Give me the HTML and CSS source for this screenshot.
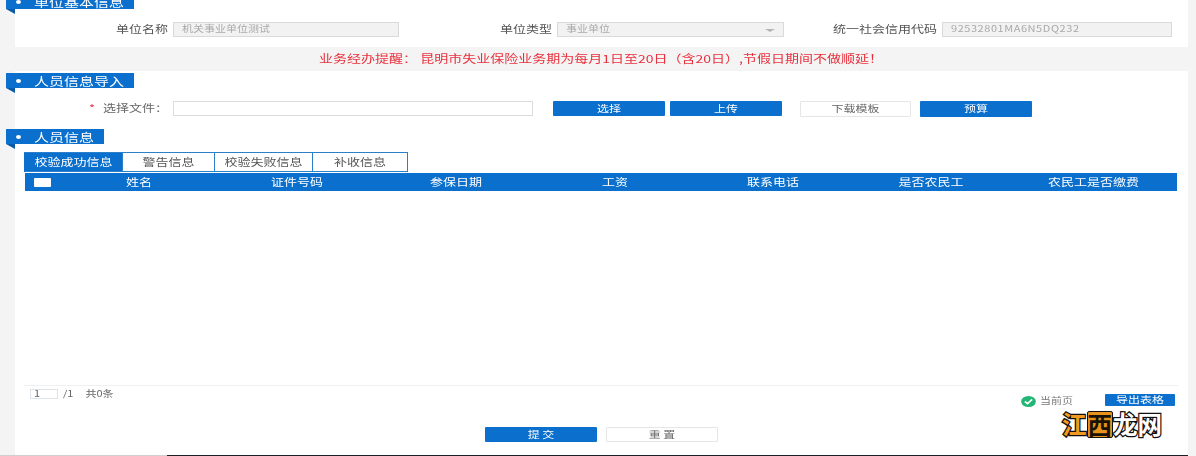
FILE: index.html
```html
<!DOCTYPE html>
<html lang="zh-CN">
<head>
<meta charset="utf-8">
<title>人员信息导入</title>
<link rel="stylesheet" href="styles.css">
</head>
<body>
<div class="page">
  <section class="panel panel-info">
    <h2 class="ribbon ribbon-top ribbon-wide"><i class="dot"></i><span class="sq">单位基本信息</span></h2>
    <div class="info-row">
      <label class="lab lab-a"><span class="sq">单位名称</span></label>
      <div class="box box-a"><span class="sq">机关事业单位测试</span></div>
      <label class="lab lab-a"><span class="sq">单位类型</span></label>
      <div class="box box-b"><span class="sq">事业单位</span><i class="caret"></i></div>
      <label class="lab lab-a"><span class="sq">统一社会信用代码</span></label>
      <div class="box box-c"><span class="sq">92532801MA6N5DQ232</span></div>
    </div>
  </section>
  <p class="notice"><span class="sq">业务经办提醒：&nbsp;昆明市失业保险业务期为每月1日至20日（含20日）,节假日期间不做顺延！</span></p>
  <section class="panel panel-main">
    <h2 class="ribbon ribbon-wide"><i class="dot"></i><span class="sq">人员信息导入</span></h2>
    <div class="upload-row">
      <label class="file-lab"><span class="sq"><b>*</b>选择文件：</span></label>
      <div class="file-input"></div>
      <button class="btn btn-blue btn-first"><span class="sq">选择</span></button>
      <button class="btn btn-blue btn-up"><span class="sq">上传</span></button>
      <button class="btn btn-white btn-down"><span class="sq">下载模板</span></button>
      <button class="btn btn-blue btn-calc"><span class="sq">预算</span></button>
    </div>
    <h2 class="ribbon ribbon-narrow"><i class="dot"></i><span class="sq">人员信息</span></h2>
    <div class="tabs">
      <div class="tab tab-on tab-1"><span class="sq">校验成功信息</span></div>
      <div class="tab tab-2"><span class="sq">警告信息</span></div>
      <div class="tab tab-3"><span class="sq">校验失败信息</span></div>
      <div class="tab tab-4"><span class="sq">补收信息</span></div>
    </div>
    <div class="thead">
      <div class="th-check"><i class="check"></i></div>
      <div class="th"><span class="sq">姓名</span></div>
      <div class="th"><span class="sq">证件号码</span></div>
      <div class="th"><span class="sq">参保日期</span></div>
      <div class="th"><span class="sq">工资</span></div>
      <div class="th"><span class="sq">联系电话</span></div>
      <div class="th"><span class="sq">是否农民工</span></div>
      <div class="th"><span class="sq">农民工是否缴费</span></div>
    </div>
    <div class="tbody"></div>
    <div class="pager-row">
      <div class="pager">
        <div class="page-box"><span class="sq">1</span></div>
        <span class="sq page-total">/1</span>
        <span class="sq page-count">共0条</span>
      </div>
      <div class="pager-right">
        <svg class="ok" viewBox="0 0 16 12" aria-hidden="true"><ellipse cx="8" cy="6" rx="8" ry="6" fill="#22b573"/><path d="M4 6l3 2.4L12 3.6" fill="none" stroke="#fff" stroke-width="1.8"/></svg>
        <span class="sq cur">当前页</span>
        <button class="btn btn-blue btn-export"><span class="sq">导出表格</span></button>
      </div>
    </div>
    <div class="actions">
      <button class="btn btn-blue btn-act"><span class="sq">提 交</span></button>
      <button class="btn btn-white btn-act"><span class="sq">重 置</span></button>
    </div>
  </section>
  <div class="mark"><span class="mk-a">江</span><span class="mk-b">西</span><span class="mk-c">龙网</span></div>
</div>
<div class="edge"></div>
</body>
</html>
```
FILE: styles.css
```css
* { box-sizing: border-box; }
html, body { margin: 0; padding: 0; }
body {
  position: relative;
  width: 1196px;
  height: 456px;
  overflow: hidden;
  background: #f4f4f4;
  color: #555;
  font-family: "Noto Sans CJK SC", "Liberation Sans", sans-serif;
  font-size: 13px;
}
.page { width: 1173px; margin-left: 15px; }
.sq { display: inline-block; transform: translateY(-1px) scaleY(.78); white-space: nowrap; line-height: 1; filter: blur(.35px); }
.panel { background: #fff; }
.panel-info { display: flow-root; height: 47px; }
.panel-main { display: flow-root; height: 385px; }

.ribbon {
  position: relative;
  display: flex;
  align-items: center;
  height: 15px;
  margin: 0 0 0 -9px;
  background: #0a6fcd;
  color: #fff;
  font-size: 15px;
  font-weight: 400;
}
.ribbon .sq { transform: scaleY(.78); }
.ribbon::after {
  content: "";
  position: absolute;
  left: 0;
  top: 100%;
  border-top: 5px solid #0a5aa8;
  border-left: 9px solid transparent;
}
.ribbon-top { margin-top: -6px; }
.ribbon-wide { width: 128px; }
.ribbon-narrow { width: 98px; margin-top: 12px; }
.panel-main > .ribbon-wide { margin-top: 2px; }
.dot { width: 5px; height: 4px; margin: 0 13px 0 10px; border-radius: 50%; background: #fff; }

.info-row { display: flex; align-items: stretch; height: 15px; margin-top: 13px; }
.lab { display: flex; align-items: center; justify-content: flex-end; width: 158px; padding-right: 5px; font-size: 13px; color: #555; }
.box {
  position: relative;
  display: flex;
  align-items: center;
  padding-left: 8px;
  border: 1px solid #dadada;
  background: #f3f2f2;
  color: #a9a9a9;
  font-size: 11px;
}
.box-a { width: 226px; }
.box-b { width: 227px; }
.box-c { width: 230px; letter-spacing: .55px; }
.caret {
  position: absolute;
  right: 8px;
  top: 6px;
  border-top: 3px solid #b5b5b5;
  border-left: 5px solid transparent;
  border-right: 5px solid transparent;
}

.notice {
  height: 24px;
  margin: 0;
  padding-left: 304px;
  display: flex;
  align-items: center;
  color: #e9303d;
  font-size: 14px;
}

.upload-row { display: flex; align-items: flex-start; height: 16px; margin-top: 13px; }
.file-lab { display: flex; align-items: center; justify-content: flex-end; width: 153px; height: 15px; font-size: 13px; color: #666; }
.file-lab b { margin-right: 8px; color: #e9303d; font-weight: 400; }
.file-input { width: 360px; height: 15px; margin-left: 5px; border: 1px solid #dcdcdc; background: #fff; }

.btn {
  display: flex;
  align-items: center;
  justify-content: center;
  padding: 0;
  border: 0;
  font: inherit;
  font-size: 12px;
  border-radius: 1px;
}
.btn-blue { background: #0a6fcd; color: #fff; }
.btn-white { background: #fff; border: 1px solid #e6e6e6; color: #666; }
.btn-first { width: 112px; height: 15px; margin-left: 20px; }
.btn-up { width: 112px; height: 15px; margin-left: 5px; }
.btn-down { width: 111px; height: 16px; margin-left: 18px; }
.btn-calc { width: 112px; height: 16px; margin-left: 9px; }

.tabs { display: flex; height: 20px; margin: 8px 0 1px 9px; }
.tab {
  display: flex;
  align-items: center;
  justify-content: center;
  height: 20px;
  border: 1px solid #2b80c9;
  border-left: 0;
  color: #555;
  font-size: 13px;
}
.tab-on { background: #0a6fcd; color: #fff; border-left: 1px solid #0a6fcd; }
.tab-1 { width: 99px; }
.tab-2 { width: 92px; }
.tab-3 { width: 98px; }
.tab-4 { width: 95px; }

.thead {
  display: grid;
  grid-template-columns: 35px 158px 158px 160px 158px 158px 158px 167px;
  align-items: center;
  width: 1152px;
  height: 18px;
  margin-left: 10px;
  background: #0a6fcd;
  color: #fff;
  font-size: 13px;
}
.th { text-align: center; }
.th-check { display: flex; padding-left: 9px; }
.check { width: 17px; height: 9px; background: #fff; border-radius: 1px; }
.tbody { height: 195px; margin: 0 10px 0 9px; border-bottom: 1px solid #f0f0f0; }

.pager-row { display: flex; justify-content: space-between; height: 41px; margin-left: 15px; }
.pager { display: flex; align-items: flex-start; padding-top: 3px; font-size: 11px; color: #666; }
.page-box { display: flex; align-items: center; width: 28px; height: 10px; padding-left: 3px; border: 1px solid #dde3e8; }
.page-total { margin-left: 5px; }
.page-count { margin-left: 12px; }
.pager-right { display: flex; align-items: center; height: 13px; margin-top: 7px; padding-right: 13px; }
.ok { display: block; width: 15px; height: 11px; margin-top: 3px; }
.cur { width: 65px; margin: 3px 0 0 4px; font-size: 11px; color: #777; }
.btn-export { width: 70px; height: 12px; font-size: 12px; }

.actions { display: flex; gap: 9px; margin-left: 470px; }
.btn-act { width: 112px; height: 15px; font-size: 12px; }

.mark {
  position: absolute;
  left: 1062px;
  top: 407px;
  display: flex;
  font-size: 24.5px;
  font-weight: 700;
  line-height: 34px;
  -webkit-text-stroke: 2.5px #111;
  paint-order: stroke fill;
}
.mk-a { color: #f29a1f; }
.mk-b { color: #1a1206; background: #e8931c; height: 27px; margin-top: 4px; line-height: 25px; border: 1px solid #111; border-radius: 2px; -webkit-text-stroke: 0; }
.mk-c { color: #fff; }
.edge {
  position: absolute;
  left: 0;
  top: 455px;
  width: 1188px;
  height: 1px;
  background: linear-gradient(to right, #cfcfcf 167px, #1a2026 167px);
}
```
